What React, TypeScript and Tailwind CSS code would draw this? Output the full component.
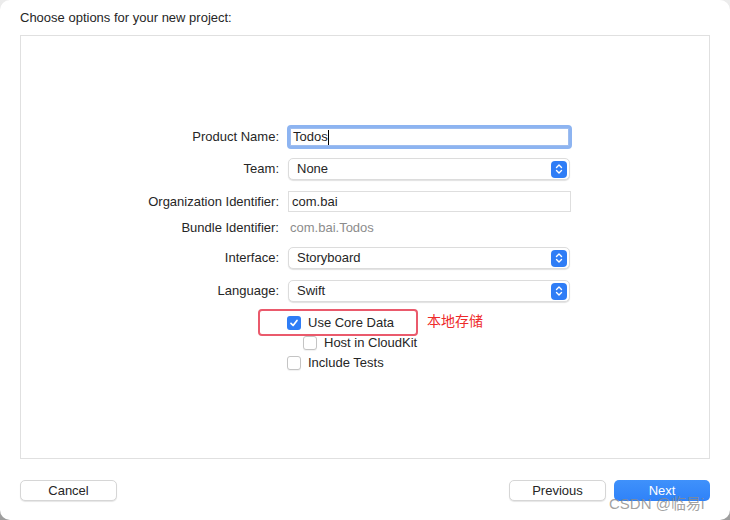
import React from "react";

const font = { fontFamily: '"Liberation Sans", "Noto Sans CJK SC", sans-serif' };

function Stepper() {
  return (
    <div className="w-[16px] h-[17px] rounded-[4px] bg-[#2f7df6] flex items-center justify-center">
      <svg width="8" height="12" viewBox="0 0 8 12" fill="none">
        <path d="M1.5 4.5 L4 2 L6.5 4.5" stroke="white" strokeWidth="1.4" strokeLinecap="round" strokeLinejoin="round" />
        <path d="M1.5 7.5 L4 10 L6.5 7.5" stroke="white" strokeWidth="1.4" strokeLinecap="round" strokeLinejoin="round" />
      </svg>
    </div>
  );
}

function Popup({ value }: { value: string }) {
  return (
    <div className="w-[282px] h-[22px] rounded-[5px] bg-white border border-[#dcdcdc] shadow-[0_1px_1px_rgba(0,0,0,0.12)] flex items-center justify-between pl-[8px] pr-[2px]">
      <span className="text-[13px] text-[#262626]">{value}</span>
      <Stepper />
    </div>
  );
}

function Checkbox({ checked }: { checked?: boolean }) {
  return checked ? (
    <div className="w-[14px] h-[14px] rounded-[3px] bg-[#2f7df6] flex items-center justify-center">
      <svg width="10" height="10" viewBox="0 0 10 10" fill="none">
        <path d="M2 5.3 L4.1 7.5 L8 2.5" stroke="white" strokeWidth="1.7" strokeLinecap="round" strokeLinejoin="round" />
      </svg>
    </div>
  ) : (
    <div className="w-[14px] h-[14px] rounded-[3px] bg-white border border-[#c4c4c4] shadow-[0_1px_1px_rgba(0,0,0,0.06)]" />
  );
}

function Row({ label, children, className }: { label: string; children: React.ReactNode; className: string }) {
  return (
    <div className={`flex items-center ${className}`}>
      <div className="w-[267px] text-right text-[13px] text-[#262626] pr-[9px]">{label}</div>
      {children}
    </div>
  );
}

export default function App() {
  return (
    <div className="w-[730px] h-[520px] bg-gradient-to-b from-[#ececec] to-[#9e9e9e]" style={font}>
      <div className="relative w-full h-full bg-white rounded-[10px] px-5 flex flex-col">
        {/* Title */}
        <div className="pt-[10px] h-[35px] text-[13px] leading-[16px] text-[#262626]">
          Choose options for your new project:
        </div>

        {/* Options box */}
        <div className="h-[424px] border border-[#e0e0e0] flex flex-col">
          <Row label="Product Name:" className="mt-[90px] h-[22px]">
            <div className="w-[285px] h-[24px] -ml-[1px] rounded-[4px] border-[3px] border-[#8db4f1] flex items-center">
              <div className="w-full h-full bg-white border border-[#9ebdef] flex items-center pl-[2px]">
                <span className="text-[13px] text-[#1f1f1f]">Todos</span>
                <span className="w-px h-[15px] bg-black" />
              </div>
            </div>
          </Row>
          <Row label="Team:" className="mt-[10px] h-[22px]">
            <Popup value="None" />
          </Row>
          <Row label="Organization Identifier:" className="mt-[11px] h-[21px]">
            <div className="w-[283px] h-[21px] bg-white border border-[#dedede] flex items-center pl-[3px]">
              <span className="text-[13px] text-[#1f1f1f]">com.bai</span>
            </div>
          </Row>
          <Row label="Bundle Identifier:" className="mt-[8px] h-[16px]">
            <span className="text-[13px] text-[#8c8c8c] pl-[2px]">com.bai.Todos</span>
          </Row>
          <Row label="Interface:" className="mt-[11px] h-[22px]">
            <Popup value="Storyboard" />
          </Row>
          <Row label="Language:" className="mt-[11px] h-[22px]">
            <Popup value="Swift" />
          </Row>

          {/* Checkboxes */}
          <div className="relative mt-[11px] ml-[266px] flex flex-col">
            <div className="flex items-center gap-[7px] h-[20px]">
              <Checkbox checked />
              <span className="text-[13px] text-[#262626]">Use Core Data</span>
            </div>
            <div className="flex items-center gap-[7px] h-[20px] ml-[16px]">
              <Checkbox />
              <span className="text-[13px] text-[#262626]">Host in CloudKit</span>
            </div>
            <div className="flex items-center gap-[7px] h-[20px]">
              <Checkbox />
              <span className="text-[13px] text-[#262626]">Include Tests</span>
            </div>

            {/* Annotation */}
            <div className="absolute left-[-29px] top-[-4px] w-[160px] h-[27px] rounded-[4px] border-2 border-[#ea5a6c]" />
            <span className="absolute left-[140px] top-[-2px] text-[14px] text-[#ee2a2a] whitespace-nowrap">
              本地存储
            </span>
          </div>
        </div>

        {/* Bottom buttons */}
        <div className="mt-[21px] flex items-center">
          <button className="w-[97px] h-[21px] rounded-[5px] bg-white border border-[#d6d6d6] shadow-[0_1px_1px_rgba(0,0,0,0.1)] text-[13px] leading-[19px] text-[#262626]">
            Cancel
          </button>
          <div className="flex-1" />
          <button className="w-[97px] h-[21px] rounded-[5px] bg-white border border-[#d6d6d6] shadow-[0_1px_1px_rgba(0,0,0,0.1)] text-[13px] leading-[19px] text-[#262626]">
            Previous
          </button>
          <button className="ml-[8px] w-[96px] h-[21px] rounded-[5px] bg-gradient-to-b from-[#3f91fb] to-[#2f82f8] text-[13px] leading-[19px] font-medium text-white">
            Next
          </button>
        </div>

        {/* Watermark */}
        <span className="absolute left-[609px] top-[493px] text-[15px] text-[#8a8a8a]/80 whitespace-nowrap">
          CSDN @临易i
        </span>
      </div>
    </div>
  );
}
